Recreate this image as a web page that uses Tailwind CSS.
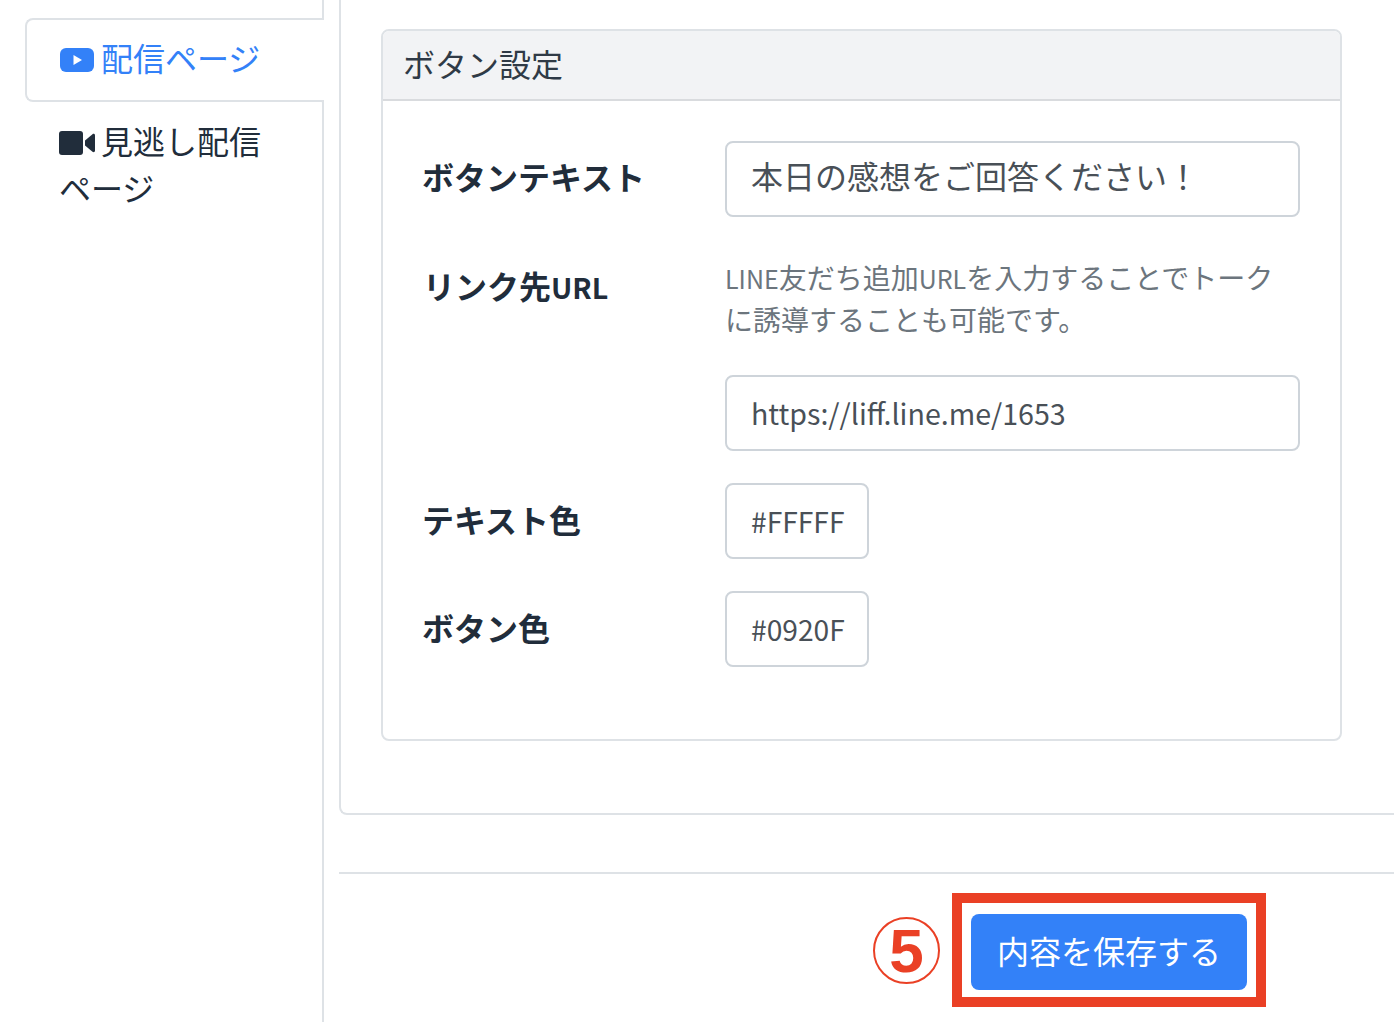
<!DOCTYPE html>
<html lang="ja">
<head>
  <meta charset="UTF-8" />
  <title>ボタン設定</title>
  <script src="https://cdn.jsdelivr.net/npm/@tailwindcss/browser@4"></script>
</head>
<body class="bg-white h-[1022px] overflow-hidden font-['Noto_Sans_CJK_JP','Noto_Sans',sans-serif] text-[#212d3b]">
  <div class="flex h-[1022px]">
    <!-- tabs -->
    <nav class="w-[324px] shrink-0 pl-[25px] flex flex-col text-[32px] leading-[47px]">
      <div class="h-[20px] ml-[8px] border-r-2 border-b-2 border-[#dee2e6] rounded-br-[3px]"></div>
      <a class="h-[84px] border-2 border-r-0 border-[#dee2e6] rounded-l-[8px] -mt-[2px] bg-white flex items-center pl-[33px] text-[#3381f8] pb-[6px]">
        <svg class="w-[34px] h-[24px] mr-[7px] mt-[6px]" viewBox="0 0 34 24"><rect width="34" height="24" rx="6" fill="#3381f8"/><path d="M13.500 7v10l8.500-5z" fill="#fff"/></svg>
        <span>配信ページ</span>
      </a>
      <div class="flex-1 ml-[8px] border-r-2 border-t-2 border-[#dee2e6] rounded-tr-[3px] -mt-[2px] pl-[26px] pr-[40px] pt-[15px]">
        <svg class="inline-block w-[36px] h-[24px] mr-[6px] align-[-1px]" viewBox="0 0 36 24"><rect width="24" height="24" rx="3" fill="#212d3b"/><path d="M26 9.500 33.500 3.200c1-.8 2.500-.2 2.500 1.100v15.400c0 1.300-1.500 1.900-2.500 1.100L26 14.500z" fill="#212d3b"/></svg><span>見逃し配信ページ</span>
      </div>
    </nav>

    <main class="flex-1 min-w-0 pl-[15px] flex flex-col">
      <section class="w-[1100px] h-[815px] border-l-2 border-b-2 border-[#dee2e6] rounded-bl-[8px] pl-[40px] pt-[29px]">
        <div class="w-[961px] h-[712px] border-2 border-[#dee2e6] rounded-[8px] overflow-hidden">
          <h2 class="h-[70px] bg-[#f2f3f5] border-b-2 border-[#d9dbde] pl-[20px] pb-[5px] flex items-center text-[32px] leading-none text-[#2f3a46]">ボタン設定</h2>
          <div class="pl-[40px] pt-[40px] flex flex-col text-[32px]">
            <div class="flex h-[76px] items-center">
              <label class="w-[302px] font-bold leading-none pb-[6px] -ml-[1px] mr-[1px]">ボタンテキスト</label>
              <div class="w-[575px] h-[76px] border-2 border-[#ced4da] rounded-[8px] pl-[24px] pb-[9px] flex items-center text-[#495057] leading-none">本日の感想をご回答ください！</div>
            </div>
            <div class="flex mt-[33px]">
              <label class="w-[302px] font-bold leading-none pt-[19px]">リンク先<span class="text-[28.500px]">URL</span></label>
              <div class="w-[575px]">
                <p class="text-[28px] leading-[42px] text-[#6c757d] mt-[6px]"><span class="text-[25px] leading-none">LINE</span>友だち追加<span class="text-[25px] leading-none">URL</span>を入力することでトークに誘導することも可能です。</p>
                <div class="mt-[35px] h-[76px] border-2 border-[#ced4da] rounded-[8px] pl-[24px] flex items-center text-[#495057] text-[28.600px] leading-none">https://liff.line.me/1653</div>
              </div>
            </div>
            <div class="flex h-[76px] items-center mt-[32px]">
              <label class="w-[302px] font-bold leading-none pb-[4px] -ml-[1px] mr-[1px]">テキスト色</label>
              <div class="w-[144px] h-[76px] border-2 border-[#ced4da] rounded-[8px] pl-[24px] flex items-center text-[#495057] text-[28.200px] leading-none">#FFFFF</div>
            </div>
            <div class="flex h-[76px] items-center mt-[32px]">
              <label class="w-[302px] font-bold leading-none pb-[4px] -ml-[1px] mr-[1px]">ボタン色</label>
              <div class="w-[144px] h-[76px] border-2 border-[#ced4da] rounded-[8px] pl-[24px] flex items-center text-[#495057] text-[28.200px] leading-none">#0920F</div>
            </div>
          </div>
        </div>
      </section>
      <footer class="mt-[57px] w-[1100px] border-t-2 border-[#dee2e6] pt-[19px] pl-[534px] flex items-start">
        <span class="w-[67px] h-[67px] mt-[24px] mr-[12px] rounded-full border-2 border-[#ea4025] flex items-center justify-center text-[#ea4025] text-[62px] font-bold leading-none font-['Liberation_Sans',sans-serif]">5</span>
        <div class="w-[314px] h-[114px] border-[10px] border-[#ea4025] pl-[9px] pt-[11px]">
          <button class="w-[276px] h-[76px] rounded-[8px] bg-[#3381f8] text-white text-[32px] leading-none pb-[4px]">内容を保存する</button>
        </div>
      </footer>
    </main>
  </div>
</body>
</html>
